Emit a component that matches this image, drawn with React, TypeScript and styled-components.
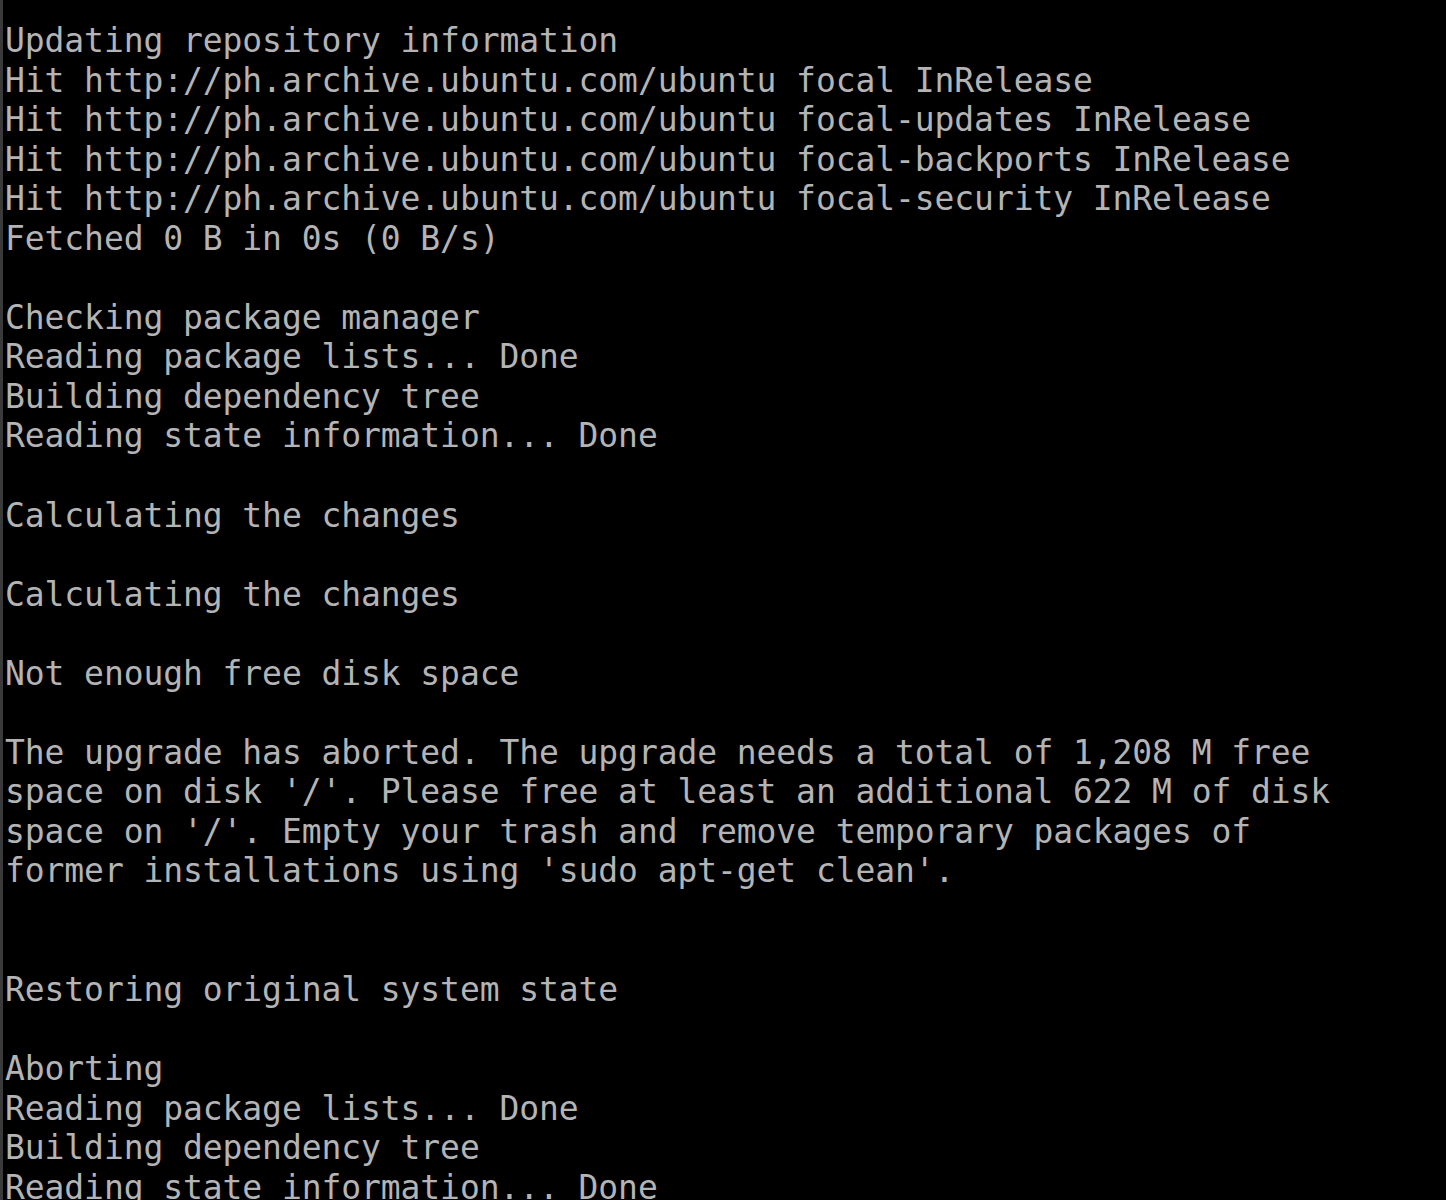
import React from 'react'
import styled, { createGlobalStyle } from 'styled-components'

const GlobalStyle = createGlobalStyle`
  html, body {
    margin: 0;
    padding: 0;
    background-color: #000;
  }
`

const Screen = styled.div`
  width: 1446px;
  height: 1200px;
  overflow: hidden;
  box-sizing: border-box;
  background-color: #000;
  border-left: 3px solid #3a3a3a;
  padding: 21px 0 0 2px;
`

const Line = styled.div`
  font-family: 'DejaVu Sans Mono', 'Liberation Mono', monospace;
  font-size: 33px;
  line-height: 39.55px;
  height: 39.55px;
  letter-spacing: -0.09px;
  color: #b4b4b4;
  white-space: pre;
`

const output: string[] = [
  'Updating repository information',
  'Hit http://ph.archive.ubuntu.com/ubuntu focal InRelease',
  'Hit http://ph.archive.ubuntu.com/ubuntu focal-updates InRelease',
  'Hit http://ph.archive.ubuntu.com/ubuntu focal-backports InRelease',
  'Hit http://ph.archive.ubuntu.com/ubuntu focal-security InRelease',
  'Fetched 0 B in 0s (0 B/s)',
  '',
  'Checking package manager',
  'Reading package lists... Done',
  'Building dependency tree',
  'Reading state information... Done',
  '',
  'Calculating the changes',
  '',
  'Calculating the changes',
  '',
  'Not enough free disk space',
  '',
  'The upgrade has aborted. The upgrade needs a total of 1,208 M free',
  "space on disk '/'. Please free at least an additional 622 M of disk",
  "space on '/'. Empty your trash and remove temporary packages of",
  "former installations using 'sudo apt-get clean'.",
  '',
  '',
  'Restoring original system state',
  '',
  'Aborting',
  'Reading package lists... Done',
  'Building dependency tree',
  'Reading state information... Done',
]

const App: React.FC = () => {
  return (
    <>
      <GlobalStyle />
      <Screen>
        {output.map((text, i) => (
          <Line key={i}>{text}</Line>
        ))}
      </Screen>
    </>
  )
}

export default App
